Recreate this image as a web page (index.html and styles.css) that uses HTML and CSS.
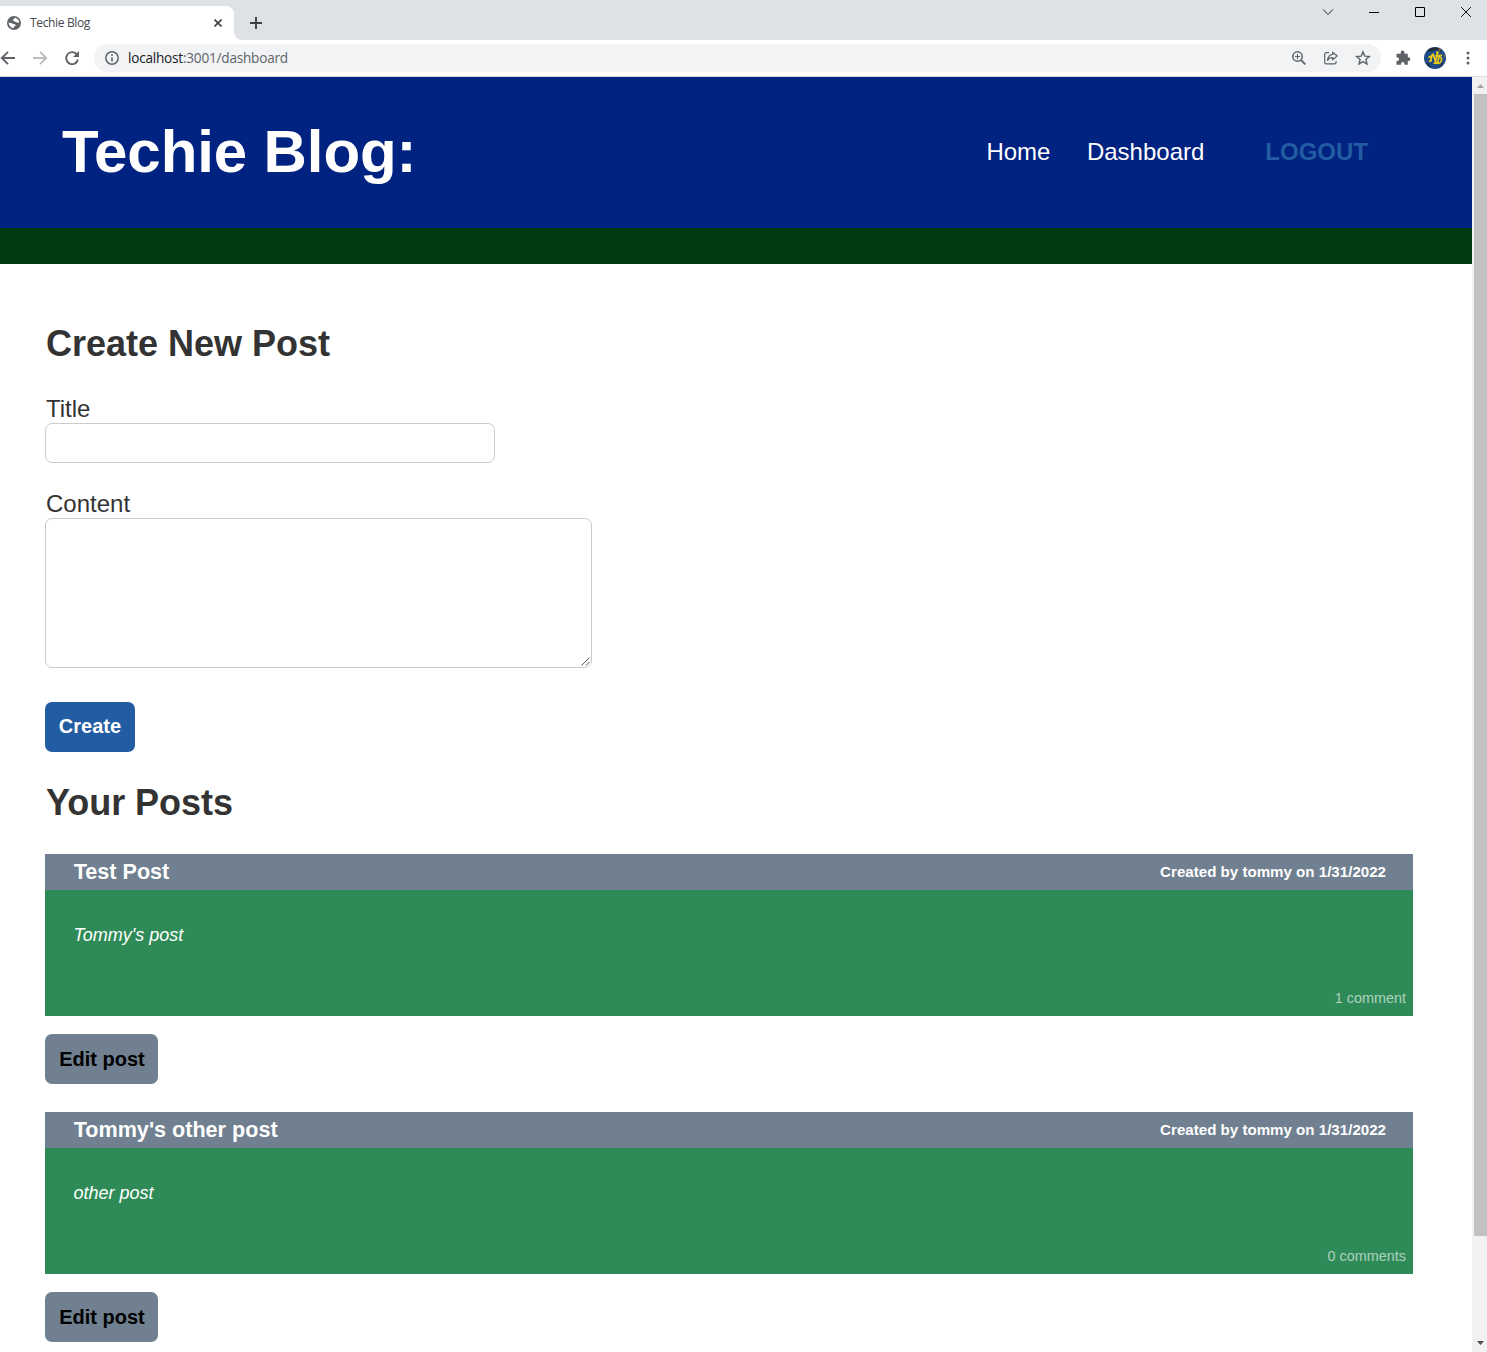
FILE: index.html
```html
<!DOCTYPE html>
<html lang="en">
<head>
<meta charset="utf-8">
<title>Techie Blog</title>
<link rel="stylesheet" href="styles.css">
</head>
<body>
<div class="tabstrip">
  <div class="tab">
    <svg width="14" height="14" viewBox="0 0 14 14"><circle cx="7" cy="7" r="7" fill="#5f6368"/><path d="M8.300 1.700C7 2 7.300 3.100 6.300 3.500c-1 .4-.4 1.500.6 1.500 1.200 0 1.100 1.200 2.400 1.300 1.200.1 1.700.3 2.900.2C12 4.100 10.500 2.300 8.300 1.700zM1.600 6.800c.2 2.700 2.100 4.900 4.800 5.400.6-.8.200-1.500 1.200-1.900 1-.3 1.500-1.300.7-1.900C7.400 7.800 6.500 8.600 5.600 7.800 4.600 6.900 3 6.600 1.600 6.800z" fill="#fff"/></svg>
    <span class="tab-title">Techie Blog</span>
    <svg class="tab-close" width="8" height="8" viewBox="0 0 8 8"><path d="M.5.5l7 7M7.500.5l-7 7" stroke="#3c4043" stroke-width="1.600"/></svg>
  </div>
  <svg class="tab-foot" width="8" height="8" viewBox="0 0 8 8"><path d="M0 0a8 8 0 0 0 8 8H0z" fill="#fff"/></svg>
  <svg class="new-tab" width="12" height="12" viewBox="0 0 12 12"><path d="M6 0v12M0 6h12" stroke="#3c4043" stroke-width="1.900"/></svg>
  <div class="window-buttons">
    <svg width="12" height="12" viewBox="0 0 12 12"><path d="M1 3.500l5 5 5-5" fill="none" stroke="#222"/></svg>
    <svg width="12" height="12" viewBox="0 0 12 12"><path d="M1 6.500h10" stroke="#000"/></svg>
    <svg width="12" height="12" viewBox="0 0 12 12"><path d="M1.500 1.500h9v9h-9z" fill="none" stroke="#000"/></svg>
    <svg width="12" height="12" viewBox="0 0 12 12"><path d="M1 1l10 10M11 1L1 11" stroke="#111"/></svg>
  </div>
</div>
<div class="toolbar">
  <div class="nav-buttons">
    <svg width="16" height="16" viewBox="0 0 16 16"><path d="M15 8H2M8 1.800L1.800 8 8 14.200" fill="none" stroke="#5f6368" stroke-width="1.900"/></svg>
    <svg width="16" height="16" viewBox="0 0 16 16"><path d="M1 8h13M8 1.800L14.200 8 8 14.200" fill="none" stroke="#babcbe" stroke-width="1.900"/></svg>
    <svg width="16" height="16" viewBox="0 0 16 16"><path d="M12.700 4.200A6 6 0 1 0 14 9.500" fill="none" stroke="#5f6368" stroke-width="1.900"/><path d="M15 1v6H9z" fill="#5f6368"/></svg>
  </div>
  <div class="omnibox">
    <svg width="14" height="14" viewBox="0 0 14 14"><circle cx="7" cy="7" r="6.200" fill="none" stroke="#5f6368" stroke-width="1.500"/><path d="M7 6.200v4.300M7 3.300v1.600" stroke="#5f6368" stroke-width="1.600"/></svg>
    <span class="url">localhost<span class="url-path">:3001/dashboard</span></span>
    <div class="omnibox-actions">
      <svg width="16" height="16" viewBox="0 0 16 16"><circle cx="6.500" cy="6.500" r="4.700" fill="none" stroke="#5f6368" stroke-width="1.500"/><path d="M10 10l4.300 4.300" stroke="#5f6368" stroke-width="1.800"/><path d="M6.500 4v5M4 6.500h5" stroke="#5f6368" stroke-width="1.100"/></svg>
      <svg width="16" height="16" viewBox="0 0 16 16"><path d="M6 2.700H3.300A1.600 1.600 0 0 0 1.700 4.300v8a1.600 1.600 0 0 0 1.600 1.600h8.200a1.600 1.600 0 0 0 1.600-1.600V11M9.700 2.200L14.200 6 9.700 9.800V7.700C7.200 7.600 5.600 8.500 4.500 10.400c.3-3.400 2.200-5.600 5.200-6z" fill="none" stroke="#5f6368" stroke-width="1.200" stroke-linejoin="round"/></svg>
      <svg width="16" height="16" viewBox="0 0 16 16"><path d="M8 1.900l1.800 4.200 4.600.4-3.500 3 1.100 4.500L8 11.600 4 14l1.100-4.500-3.500-3 4.600-.4z" fill="none" stroke="#5f6368" stroke-width="1.400"/></svg>
    </div>
  </div>
  <svg class="extensions" width="16" height="16" viewBox="0 0 16 16"><path d="M2 3.700h3.700V2.500a1.900 1.900 0 0 1 3.800 0v1.200h3.300v3.500h.7a1.900 1.900 0 0 1 0 3.800h-.7v3.700H9.500v-1a1.700 1.700 0 0 0-3.400 0v1H1.500v-3.700h.9a1.700 1.700 0 0 0 0-3.400h-.9V3.700z" fill="#5f6368"/></svg>
  <svg class="avatar" width="22" height="22" viewBox="0 0 22 22"><circle cx="11" cy="11" r="11" fill="#1f4c86"/><path d="M3 4a11 11 0 0 1 15-1l-2 1.500-4-2-5 2zM20 14l-2 4-4 3.500 3-4zM2 15l3 2 2 4a11 11 0 0 1-5-6z" fill="#202936"/><path d="M14 1l3 1.500-1.500 1.500zM20 7l1.500 2-1 2z" fill="#a67842"/><g fill="none" stroke="#f0cb18" stroke-width="1.700"><path d="M8.500 7L6.500 14M9 6.500l3 9.500M13.500 5.500l-2.500 11M4.500 10.500l3-1.500M5 14.500l3-1M12 5.500l3-.5M9.500 16.500l3-.5M11.500 8.500l5 1.500c2 1.500 1 6-2 6.500l-2-.5M15.500 7.500l-2 9M16.500 8l1.500.5"/></g></svg>
  <svg class="menu" width="4" height="14" viewBox="0 0 4 14"><g fill="#5f6368"><circle cx="2" cy="2" r="1.500"/><circle cx="2" cy="7" r="1.500"/><circle cx="2" cy="12" r="1.500"/></g></svg>
</div>
<div class="viewport">
  <div class="page">
    <header class="site-header">
      <h1>Techie Blog:</h1>
      <nav>
        <a class="nav-home">Home</a>
        <a class="nav-dashboard">Dashboard</a>
        <a class="logout">LOGOUT</a>
      </nav>
    </header>
    <div class="stripe"></div>
    <main>
      <form>
        <h2>Create New Post</h2>
        <label for="title">Title</label>
        <input id="title" type="text">
        <label for="content">Content</label>
        <div class="textarea-wrap">
          <textarea id="content"></textarea>
          <svg class="grip" width="9" height="9" viewBox="0 0 9 9"><path d="M.5 8.500l8-8M5 8.500L8.500 5" stroke="#555" stroke-width="1"/></svg>
        </div>
        <button class="btn create" type="button">Create</button>
      </form>
      <h2 class="posts-heading">Your Posts</h2>
      <article>
        <div class="post-head"><h3>Test Post</h3><span>Created by tommy on 1/31/2022</span></div>
        <div class="post-body"><p>Tommy's post</p><div class="comments">1 comment</div></div>
        <button class="btn edit" type="button">Edit post</button>
      </article>
      <article>
        <div class="post-head"><h3>Tommy's other post</h3><span>Created by tommy on 1/31/2022</span></div>
        <div class="post-body"><p>other post</p><div class="comments">0 comments</div></div>
        <button class="btn edit" type="button">Edit post</button>
      </article>
    </main>
  </div>
  <div class="scrollbar">
    <svg width="7" height="4" viewBox="0 0 7 4"><path d="M0 4l3.500-4L7 4z" fill="#a3a3a3"/></svg>
    <div class="thumb"></div>
    <svg class="down" width="7" height="4" viewBox="0 0 7 4"><path d="M0 0h7L3.500 4z" fill="#505050"/></svg>
  </div>
</div>
</body>
</html>
```
FILE: styles.css
```css
* { box-sizing: border-box; }
body {
  margin: 0;
  height: 1352px;
  overflow: hidden;
  display: flex;
  flex-direction: column;
  background: #fff;
  color: #333;
  font-family: "Liberation Sans", Arial, sans-serif;
}
svg { display: block; flex: none; }
h1, h2, h3, p { margin: 0; }

/* Browser tab strip */
.tabstrip {
  height: 40px;
  flex: none;
  display: flex;
  align-items: flex-end;
  background: #dee1e6;
}
.tab {
  width: 234px;
  height: 34px;
  display: flex;
  align-items: center;
  padding: 0 12px 0 7px;
  background: #fff;
  border-radius: 0 8px 0 0;
}
.tab-title {
  margin-left: 9px;
  font: 12px/18px "Open Sans", sans-serif;
  letter-spacing: -0.35px;
  color: #45494d;
}
.tab-close { margin-left: auto; }
.new-tab { margin: 0 0 11px 8px; }
.window-buttons {
  align-self: flex-start;
  display: flex;
  gap: 34px;
  margin: 6px 15px 0 auto;
}

/* Address bar */
.toolbar {
  height: 37px;
  flex: none;
  display: flex;
  align-items: center;
  border-bottom: 1px solid #dadce0;
}
.nav-buttons { display: flex; gap: 16px; }
.omnibox {
  width: 1287px;
  height: 28px;
  margin-left: 14px;
  padding: 0 10px 0 11px;
  display: flex;
  align-items: center;
  border-radius: 14px;
  background: #f1f3f4;
}
.url {
  margin-left: 9px;
  font: 13.6px/20px "Open Sans", sans-serif;
  letter-spacing: -0.22px;
  color: #202124;
}
.url-path { color: #5f6368; }
.omnibox-actions { display: flex; gap: 16px; margin-left: auto; }
.extensions { margin-left: 14px; }
.avatar { margin-left: 13px; }
.menu { margin-left: 19.500px; }

/* Page area and scrollbar */
.viewport { flex: 1; min-height: 0; display: flex; }
.page { width: 1472px; overflow: hidden; }
.scrollbar {
  width: 15px;
  display: flex;
  flex-direction: column;
  align-items: center;
  padding: 7px 0 7px 2px;
  background: #f1f1f1;
}
.thumb { width: 13px; height: 1142px; margin-top: 6px; background: #c1c1c1; }
.down { margin-top: auto; }

/* Site header */
.site-header {
  height: 151px;
  display: flex;
  justify-content: space-between;
  align-items: center;
  padding: 0 104px 2px 62px;
  background: #002280;
  color: #fff;
}
h1 { font-size: 60px; line-height: 68px; letter-spacing: -0.1px; }
nav { display: flex; font-size: 24px; line-height: 28px; }
.nav-dashboard { margin-left: 36.500px; }
.logout {
  margin-left: 61px;
  font-weight: bold;
  color: #225ca3;
}
.stripe { height: 36px; background: #003912; }

main { padding: 59px 59px 0 45px; }
h2 { padding-left: 1px; font-size: 36px; line-height: 41px; }
form { display: flex; flex-direction: column; align-items: flex-start; }
label { margin-top: 31px; padding-left: 1px; font-size: 24px; line-height: 28px; }
input, textarea {
  display: block;
  border: 1px solid #ccc;
  border-radius: 7px;
  background: #fff;
}
input { width: 450px; height: 40px; }
input + label { margin-top: 27px; }
.textarea-wrap { position: relative; }
textarea { width: 547px; height: 150px; resize: none; }
.grip { position: absolute; right: 2px; bottom: 2px; }
.btn {
  display: block;
  height: 50px;
  padding: 0 0 2px;
  border: 0;
  border-radius: 7px;
  font: bold 20px/24px "Liberation Sans", Arial, sans-serif;
}
.create { width: 90px; margin-top: 34px; background: #225ca3; color: #fff; }
.posts-heading { margin: 30px 0 31px; letter-spacing: -0.05px; }

/* Post cards */
article { margin-bottom: 28px; }
.post-head {
  height: 36px;
  display: flex;
  justify-content: space-between;
  align-items: center;
  padding: 0 27px 1px 28.700px;
  background: #708090;
  color: #fff;
}
h3 { font-size: 21.6px; line-height: 25px; }
.post-head span { font-size: 15.120px; line-height: 18px; font-weight: bold; }
.post-body {
  height: 126px;
  display: flex;
  flex-direction: column;
  justify-content: space-between;
  padding: 35px 7px 9px 28.500px;
  background: #2e8b57;
  color: #fff;
}
.post-body p { font-size: 18px; line-height: 21px; font-style: italic; }
.comments { align-self: flex-end; font-size: 14.4px; line-height: 18px; opacity: .6; }
.edit { width: 113px; margin-top: 18px; padding: 0 0 0 1px; background: #708090; color: #000; }
```
